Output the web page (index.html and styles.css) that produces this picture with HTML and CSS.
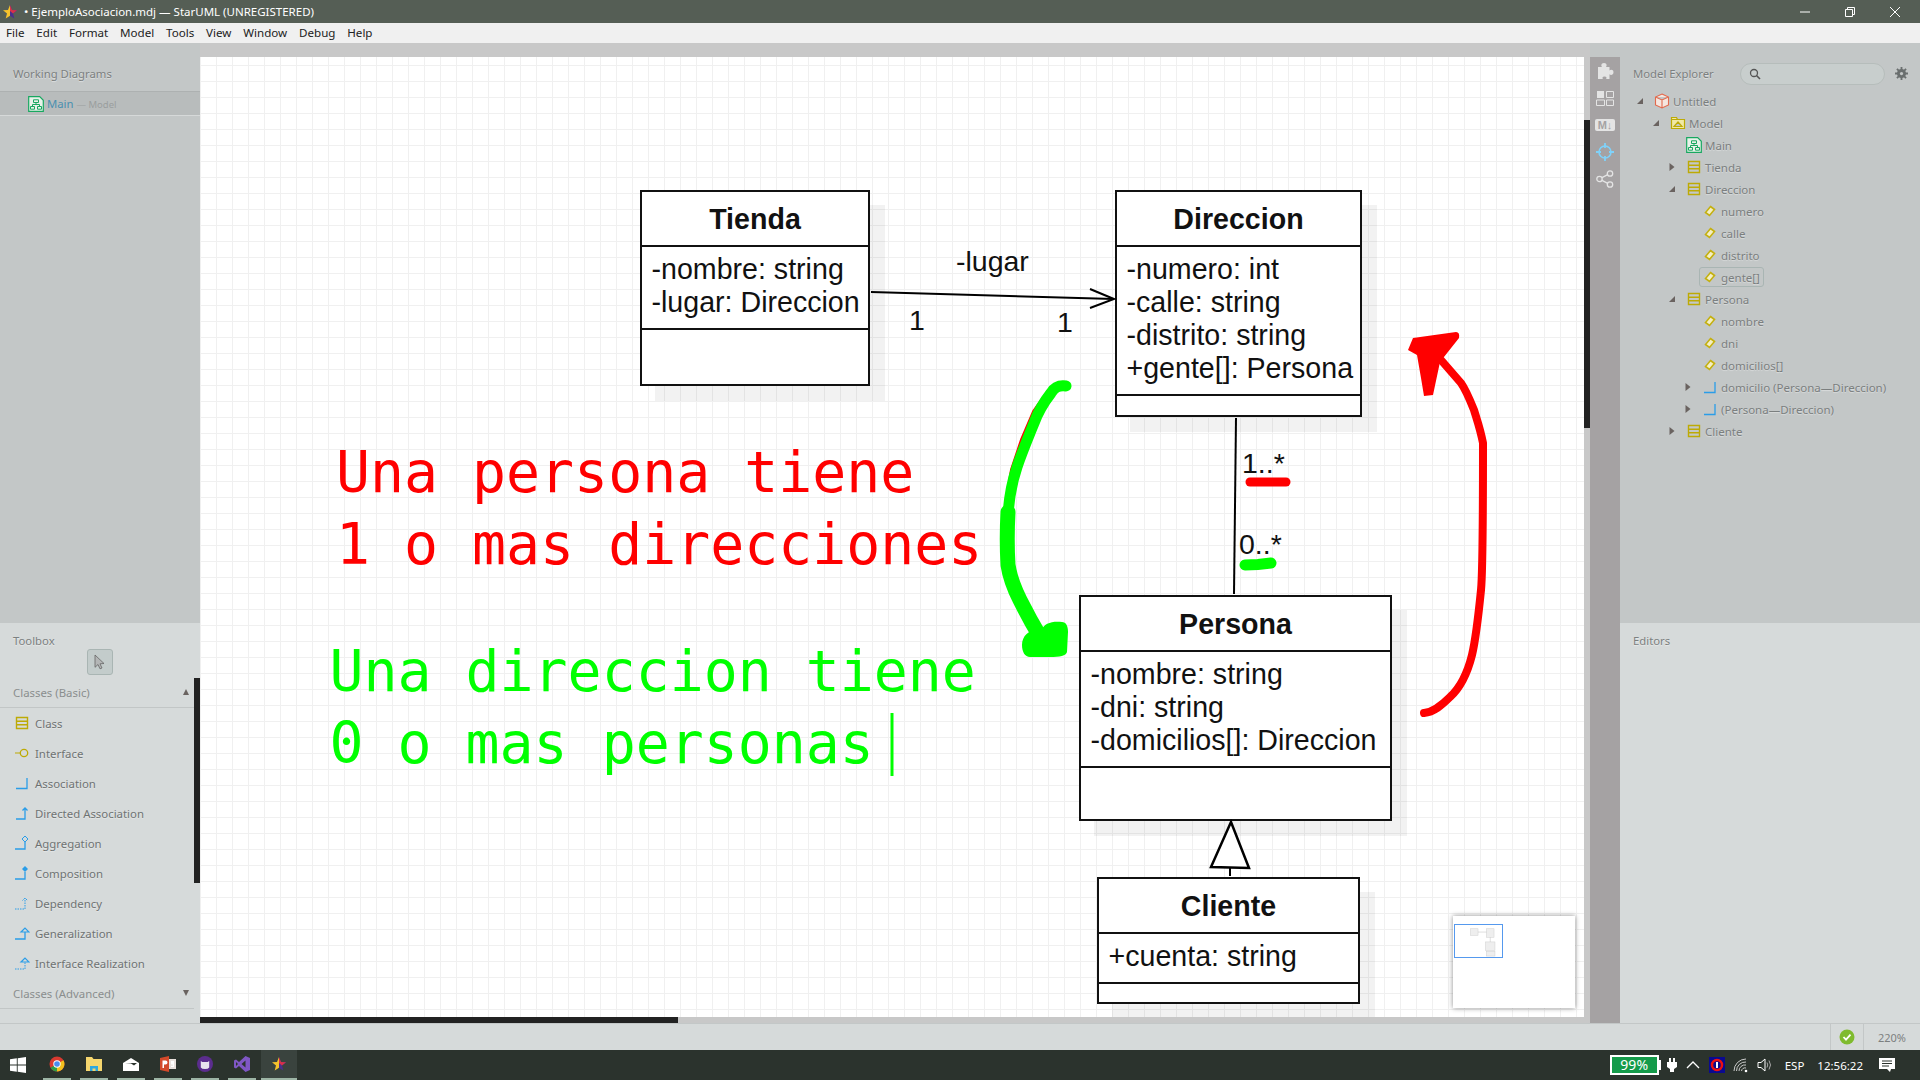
FILE: index.html
```html
<!DOCTYPE html>
<html>
<head lang="es">
    <meta charset="UTF-8">
    <title>EjemploAsociacion.mdj — StarUML</title>
    <link rel="stylesheet" href="styles.css">
</head>
<body>
    <svg class="defs" width="0" height="0">
        <symbol id="i-class" viewBox="0 0 16 16"><path d="M2.5 2.5h11v11h-11zM2.5 6.2h11M2.5 9.8h11" fill="none" stroke="#bdaa05" stroke-width="1.4"/></symbol>
        <symbol id="i-attr" viewBox="0 0 16 16"><path d="M8.5 3.5l4 3-5 6-4-3z" fill="#f4efc4" stroke="#c4b010" stroke-width="1.6"/></symbol>
        <symbol id="i-assoc" viewBox="0 0 16 16"><path d="M2 13.5h11V3" fill="none" stroke="#2a9de8" stroke-width="1.3"/></symbol>
        <symbol id="i-diagram" viewBox="0 0 16 16"><path d="M.7.7h11l3.6 3.6v11H.7z" fill="#e8f2ea" stroke="#18a860" stroke-width="1.2"/><path d="M5.5 3.8h5v2.7h-5zM2.5 10.5h4v2.7h-4zM9.5 10.5h4v2.7h-4zM8 6.5v2H4.500v2M8 8.500h3.500v2" fill="none" stroke="#18a860"/></symbol>
        <symbol id="i-open" viewBox="0 0 8 8"><path d="M7 1v6H1z" fill="#6a6360"/></symbol>
        <symbol id="i-closed" viewBox="0 0 8 8"><path d="M1.500 0l5 4-5 4z" fill="#6a6360"/></symbol>
        <symbol id="i-star" viewBox="0 0 16 16"><path d="M8 1l2 5 5 .3-4 3.300 1.300 5L8 11.800z" fill="#4a2f8c"/><path d="M8 1L6 6l-5 .3 4 3.300-1.300 5L8 11.800z" fill="#f6c22c"/><path d="M8 1l2 5 5 .3-4 3.300L8 7z" fill="#d8304a"/></symbol>
    </svg>

    <div class="titlebar">
        <svg class="app-star"><use href="#i-star"/></svg>
        <span class="title-text">• EjemploAsociacion.mdj — StarUML (UNREGISTERED)</span>
        <div class="win-buttons">
            <svg viewBox="0 0 10 10"><path d="M0 5h10" stroke="#fff"/></svg>
            <svg viewBox="0 0 10 10"><path d="M.5 2.500h7v7h-7zM2.500 2.500V.5h7v7h-2" fill="none" stroke="#fff"/></svg>
            <svg viewBox="0 0 10 10"><path d="M0 0l10 10M10 0L0 10" stroke="#fff"/></svg>
        </div>
    </div>

    <ul class="menubar">
        <li>File</li>
        <li>Edit</li>
        <li>Format</li>
        <li>Model</li>
        <li>Tools</li>
        <li>View</li>
        <li>Window</li>
        <li>Debug</li>
        <li>Help</li>
    </ul>

    <div class="main">
        <div class="left">
            <div class="working">
                <div class="panel-title">Working Diagrams</div>
                <div class="working-row">
                    <svg class="ic"><use href="#i-diagram"/></svg>
                    <span class="working-name">Main</span>
                    <span class="working-sub">— Model</span>
                </div>
            </div>
            <div class="toolbox">
                <div class="panel-title toolbox-title">Toolbox</div>
                <div class="cursor-btn">
                    <svg viewBox="0 0 16 16" width="16" height="16"><path d="M3 1l9 8.500-4 .3 2 4.200-2 .8-2-4.300-3 2.800z" fill="#b4b6b6" stroke="#666" stroke-width=".8"/></svg>
                </div>
                <div class="tool-group"><span>Classes (Basic)</span><i class="up"></i></div>
                <div class="tool"><svg class="ic"><use href="#i-class"/></svg>Class</div>
                <div class="tool"><svg class="ic" viewBox="0 0 16 16"><path d="M1 8h5" stroke="#bdaa05"/><circle cx="10" cy="8" r="3.700" fill="none" stroke="#bdaa05" stroke-width="1.300"/></svg>Interface</div>
                <div class="tool"><svg class="ic"><use href="#i-assoc"/></svg>Association</div>
                <div class="tool"><svg class="ic" viewBox="0 0 16 16"><path d="M2 14h9V3M8.500 5.500L11 3l2.500 2.500" fill="none" stroke="#2a9de8" stroke-width="1.300"/></svg>Directed Association</div>
                <div class="tool"><svg class="ic" viewBox="0 0 16 16"><path d="M1 14h10V7" fill="none" stroke="#2a9de8" stroke-width="1.300"/><path d="M11 1l3 3-3 3-3-3z" fill="none" stroke="#2a9de8"/></svg>Aggregation</div>
                <div class="tool"><svg class="ic" viewBox="0 0 16 16"><path d="M1 14h10V7" fill="none" stroke="#2a9de8" stroke-width="1.300"/><path d="M11 1l3 3-3 3-3-3z" fill="#2a9de8"/></svg>Composition</div>
                <div class="tool"><svg class="ic" viewBox="0 0 16 16"><path d="M1 14h10V3M8.500 5.500L11 3l2.500 2.500" fill="none" stroke="#2a9de8" stroke-dasharray="1.500 1"/></svg>Dependency</div>
                <div class="tool"><svg class="ic" viewBox="0 0 16 16"><path d="M1 14h10V7" fill="none" stroke="#2a9de8" stroke-width="1.300"/><path d="M7 7l4-4 4 4z" fill="none" stroke="#2a9de8" stroke-width="1.200"/></svg>Generalization</div>
                <div class="tool"><svg class="ic" viewBox="0 0 16 16"><path d="M1 14h10V7" fill="none" stroke="#2a9de8" stroke-dasharray="1.500 1"/><path d="M7 7l4-4 4 4z" fill="none" stroke="#2a9de8" stroke-width="1.200"/></svg>Interface Realization</div>
                <div class="tool-group tool-group-adv"><span>Classes (Advanced)</span><i class="down"></i></div>
                <div class="tool-group tool-group-next"><span>Packages</span><i class="down"></i></div>
                <div class="toolbox-scroll"></div>
            </div>
        </div>

        <div class="center">
            <div class="canvas-row">
                <div class="canvas">
                    <div class="node node-tienda">
                        <div class="node-name">Tienda</div>
                        <div class="node-attrs">
                            <div>-nombre: string</div>
                            <div>-lugar: Direccion</div>
                        </div>
                        <div class="node-ops"></div>
                    </div>
                    <div class="node node-direccion">
                        <div class="node-name">Direccion</div>
                        <div class="node-attrs">
                            <div>-numero: int</div>
                            <div>-calle: string</div>
                            <div>-distrito: string</div>
                            <div>+gente[]: Persona</div>
                        </div>
                        <div class="node-ops"></div>
                    </div>
                    <div class="node node-persona">
                        <div class="node-name">Persona</div>
                        <div class="node-attrs">
                            <div>-nombre: string</div>
                            <div>-dni: string</div>
                            <div>-domicilios[]: Direccion</div>
                        </div>
                        <div class="node-ops"></div>
                    </div>
                    <div class="node node-cliente">
                        <div class="node-name">Cliente</div>
                        <div class="node-attrs">
                            <div>+cuenta: string</div>
                        </div>
                        <div class="node-ops"></div>
                    </div>

                    <span class="edge-label lbl-lugar">-lugar</span>
                    <span class="edge-label lbl-one-a">1</span>
                    <span class="edge-label lbl-one-b">1</span>
                    <span class="edge-label lbl-many-a">1..*</span>
                    <span class="edge-label lbl-many-b">0..*</span>

                    <div class="note note-red">Una persona tiene<br>1 o mas direcciones</div>
                    <div class="note note-green">Una direccion tiene<br>0 o mas personas</div>

                    <!-- viewBox in page coordinates -->
                    <svg class="overlay" viewBox="200 57 1384 960">
                        <path d="M871 292L1114 299" stroke="#000" stroke-width="2" fill="none"/>
                        <path d="M1090 289L1114 299L1090 308" stroke="#000" stroke-width="2" fill="none"/>
                        <path d="M1236 418L1234 594" stroke="#000" stroke-width="2"/>
                        <path d="M1231 822L1211 867L1249 868z" fill="#fff" stroke="#000" stroke-width="2.500"/>
                        <path d="M1230 868V876" stroke="#000" stroke-width="2"/>

                        <path d="M1062 384L1050 391L1035 412L1023 440L1013 470L1008 500" fill="none" stroke="#f00" stroke-width="6" stroke-linecap="round"/>
                        <path d="M1066 386C1058 385 1054 388 1051 393C1044 402 1038 412 1034 423C1028 438 1022 452 1017 467C1012 482 1009 498 1008 515" fill="none" stroke="#0f0" stroke-width="11" stroke-linecap="round" stroke-linejoin="round"/>
                        <path d="M1008 512C1007 530 1007 548 1008 565C1010 578 1015 590 1020 600C1026 612 1033 625 1042 640" fill="none" stroke="#0f0" stroke-width="15" stroke-linecap="round" stroke-linejoin="round"/>
                        <path d="M1022 645C1022 634 1032 628 1041 631C1044 623 1052 621 1062 622C1066 622 1068 626 1068 632L1067 652C1066 656 1060 657 1050 657L1030 657C1025 657 1022 652 1022 645z" fill="#0f0"/>

                        <path d="M1424 713C1434 712 1442 705 1450 697C1460 688 1467 675 1472 655C1476 638 1479 610 1481 590C1483 570 1483 520 1483 443C1480 428 1477 420 1474 410C1470 400 1466 390 1461 383L1441 360" fill="none" stroke="#f00" stroke-width="8" stroke-linecap="round" stroke-linejoin="round"/>
                        <path d="M1408 350L1413 338L1456 332Q1460 332 1459 338L1440 362L1433 395L1424 396L1421 378L1417 355z" fill="#f00"/>
                        <path d="M1250 482H1286" stroke="#f00" stroke-width="9" stroke-linecap="round"/>
                        <path d="M1245 565L1258 564.500L1271 563" fill="none" stroke="#0f0" stroke-width="11" stroke-linecap="round"/>

                        <path d="M892 713V776" stroke="#0f0" stroke-width="3"/>
                    </svg>

                    <div class="minimap">
                        <svg class="mini-view" viewBox="0 0 49 34">
                            <g fill="#eee" stroke="#ccc" stroke-width=".5">
                                <rect x="16" y="4" width="8" height="7"/>
                                <rect x="33" y="4" width="8" height="9"/>
                                <rect x="32" y="18" width="10" height="9"/>
                                <rect x="33" y="28" width="9" height="5"/>
                            </g>
                            <path d="M24 7.500h9M37 13v5" stroke="#bbb" stroke-width=".5"/>
                        </svg>
                    </div>
                </div>
                <div class="vscroll"><div class="vscroll-thumb"></div></div>
            </div>
            <div class="hscroll"><div class="hscroll-thumb"></div></div>
        </div>

        <div class="rail">
            <svg class="rail-ic" viewBox="0 0 18 18"><path d="M2 5h4C5 4 4.800 1 8 1s3 3 2 4h3.500v3.500c1-1 4-1.200 4 1.800s-3 3-4 2V17H10c1-1 .8-2.500-1.500-2.500S6 16 7 17H2z" fill="#e4e4e4"/></svg>
            <svg class="rail-ic" viewBox="0 0 18 18"><path d="M1 2h7v7H1z" fill="#e4e4e4"/><path d="M10.500 2.500h7v6h-7zM.5 11h8v5.500h-8zM10.500 11h7v5.500h-7z" fill="none" stroke="#e4e4e4"/></svg>
            <div class="md-badge">M↓</div>
            <svg class="rail-ic" viewBox="0 0 18 18"><circle cx="9" cy="9" r="6" fill="none" stroke="#7fd2fa" stroke-width="1.600"/><path d="M9 0v5M9 13v5M0 9h5M13 9h5" stroke="#7fd2fa" stroke-width="1.800"/></svg>
            <svg class="rail-ic" viewBox="0 0 18 18"><circle cx="3.500" cy="9" r="2.700" fill="none" stroke="#e4e4e4" stroke-width="1.300"/><circle cx="14" cy="3.500" r="2.700" fill="none" stroke="#e4e4e4" stroke-width="1.300"/><circle cx="14" cy="14.500" r="2.700" fill="none" stroke="#e4e4e4" stroke-width="1.300"/><path d="M6 7.700l5.700-3M6 10.300l5.700 3" stroke="#e4e4e4" stroke-width="1.300"/></svg>
        </div>

        <div class="right">
            <div class="explorer">
                <div class="explorer-head">
                    <span class="panel-title explorer-title">Model Explorer</span>
                    <div class="search">
                        <svg viewBox="0 0 12 12" width="12" height="12"><circle cx="5" cy="5" r="3.500" fill="none" stroke="#555" stroke-width="1.300"/><path d="M7.500 7.500L11 11" stroke="#555" stroke-width="1.600"/></svg>
                    </div>
                    <svg class="gear" viewBox="0 0 12 12"><circle cx="6" cy="6" r="3" fill="none" stroke="#6a6f6f" stroke-width="2.400"/><path d="M6 0v12M0 6h12M1.800 1.800l8.400 8.400M10.200 1.800l-8.400 8.400" stroke="#6a6f6f" stroke-width="1.700"/><circle cx="6" cy="6" r="1.500" fill="#c3c7c7"/></svg>
                </div>
                <div class="tree">
                    <div class="row lv0"><svg class="arrow"><use href="#i-open"/></svg><svg class="ic" viewBox="0 0 16 16"><path d="M8 1l6.500 3v8L8 15l-6.500-3V4zM1.500 4L8 7l6.500-3M8 7v8" fill="#f5e6df" stroke="#e2694c" stroke-width="1.100"/></svg>Untitled</div>
                    <div class="row lv1"><svg class="arrow"><use href="#i-open"/></svg><svg class="ic" viewBox="0 0 16 16"><path d="M1.500 13.500v-11h5l1 2h7v9zM1.500 4.500h6M4 11.500h8L8 7z" fill="#f1e9a5" stroke="#bdaa05" stroke-width="1.200"/></svg>Model</div>
                    <div class="row lv2"><span class="arrow"></span><svg class="ic"><use href="#i-diagram"/></svg>Main</div>
                    <div class="row lv2"><svg class="arrow"><use href="#i-closed"/></svg><svg class="ic"><use href="#i-class"/></svg>Tienda</div>
                    <div class="row lv2"><svg class="arrow"><use href="#i-open"/></svg><svg class="ic"><use href="#i-class"/></svg>Direccion</div>
                    <div class="row lv3"><span class="arrow"></span><svg class="ic"><use href="#i-attr"/></svg>numero</div>
                    <div class="row lv3"><span class="arrow"></span><svg class="ic"><use href="#i-attr"/></svg>calle</div>
                    <div class="row lv3"><span class="arrow"></span><svg class="ic"><use href="#i-attr"/></svg>distrito</div>
                    <div class="row lv3"><span class="arrow"></span><svg class="ic"><use href="#i-attr"/></svg>gente[]<span class="row-selected"></span></div>
                    <div class="row lv2"><svg class="arrow"><use href="#i-open"/></svg><svg class="ic"><use href="#i-class"/></svg>Persona</div>
                    <div class="row lv3"><span class="arrow"></span><svg class="ic"><use href="#i-attr"/></svg>nombre</div>
                    <div class="row lv3"><span class="arrow"></span><svg class="ic"><use href="#i-attr"/></svg>dni</div>
                    <div class="row lv3"><span class="arrow"></span><svg class="ic"><use href="#i-attr"/></svg>domicilios[]</div>
                    <div class="row lv3"><svg class="arrow"><use href="#i-closed"/></svg><svg class="ic"><use href="#i-assoc"/></svg>domicilio (Persona—Direccion)</div>
                    <div class="row lv3"><svg class="arrow"><use href="#i-closed"/></svg><svg class="ic"><use href="#i-assoc"/></svg>(Persona—Direccion)</div>
                    <div class="row lv2"><svg class="arrow"><use href="#i-closed"/></svg><svg class="ic"><use href="#i-class"/></svg>Cliente</div>
                </div>
            </div>
            <div class="editors">
                <div class="panel-title editors-title">Editors</div>
            </div>
        </div>
    </div>

    <div class="statusbar">
        <div class="status-cell status-check">
            <svg viewBox="0 0 16 16" width="16" height="16"><circle cx="8" cy="8" r="7.500" fill="#7fbb2e"/><path d="M4.500 8l2.500 2.700 4.500-5" fill="none" stroke="#fff" stroke-width="1.800"/></svg>
        </div>
        <div class="status-cell status-zoom">220%</div>
    </div>

    <div class="taskbar">
        <div class="task task-start">
            <svg viewBox="0 0 16 16" width="16" height="16"><path d="M0 2.300l6.800-1v6.200H0zM7.700 1.200L16 0v7.500H7.700zM0 8.500h6.800v6.200l-6.800-1zM7.700 8.500H16V16l-8.300-1.200z" fill="#fff"/></svg>
        </div>
        <div class="task task-app">
            <svg viewBox="0 0 16 16" width="16" height="16"><circle cx="8" cy="8" r="7.500" fill="#d93a30"/><path d="M8 8L1.500 11.800A7.500 7.500 0 0 0 8 15.500z" fill="#2f9e48"/><path d="M8 8v7.500a7.500 7.500 0 0 0 6.500-11.200z" fill="#f3c11e"/><circle cx="8" cy="8" r="3.700" fill="#fff"/><circle cx="8" cy="8" r="2.800" fill="#4a8cf0"/></svg>
        </div>
        <div class="task task-app">
            <svg viewBox="0 0 16 16" width="16" height="16"><path d="M0 1h6l1.500 2H16v12H0z" fill="#f5d66e"/><path d="M4 15v-5h8v5h-2.500v-2.500h-3V15z" fill="#2fa8e0"/></svg>
        </div>
        <div class="task task-app">
            <svg viewBox="0 0 16 16" width="16" height="16"><path d="M0 7l8-5 8 5v8H0z" fill="#fff"/><path d="M2 7h12l-3 2.500L8 7.500z" fill="#2b332d"/></svg>
        </div>
        <div class="task task-app">
            <svg viewBox="0 0 16 16" width="16" height="16"><path d="M0 2l9-2v16l-9-2z" fill="#d2492a"/><path d="M9 3h7v10H9z" fill="#e8e0dc"/><path d="M2.500 4.500h3q2 0 2 2t-2 2h-1.500V12h-1.500zM11 5h3v6h-3V9.800h1.800V8.500H11z" fill="#fff"/></svg>
        </div>
        <div class="task task-app">
            <svg viewBox="0 0 16 16" width="16" height="16"><circle cx="8" cy="8" r="8" fill="#5b2d8e"/><path d="M3.800 5l1.500 1h5.400l1.500-1v6.500q-1 1.500-4.200 1.500t-4.200-1.500z" fill="#e8e4ee"/></svg>
        </div>
        <div class="task task-app">
            <svg viewBox="0 0 16 16" width="16" height="16"><path d="M11.500 0L16 2v12l-4.500 2L5 10 2 12.500 0 11.500V4.500L2 3.500 5 6zM11.500 4.500L7.500 8l4 3.500zM2 6v4l2-2z" fill="#7f57c4"/></svg>
        </div>
        <div class="task task-app task-active">
            <svg class="task-star"><use href="#i-star"/></svg>
        </div>
        <div class="tray">
            <div class="battery"><span>99%</span></div>
            <svg class="tray-ic tray-plug" viewBox="0 0 16 16"><path d="M5 1h2v4h2V1h2v4h2v5l-3 2v3H6v-3l-3-2V5h2z" fill="#fff"/></svg>
            <svg class="tray-ic" viewBox="0 0 16 16"><path d="M2 11l6-6 6 6" fill="none" stroke="#fff" stroke-width="1.300"/></svg>
            <svg class="tray-ic" viewBox="0 0 16 16"><path d="M0 0h16v16H0z" fill="#0a0a90"/><circle cx="8" cy="8" r="5" fill="none" stroke="#f01010" stroke-width="2.500"/><path d="M7 5h2v6H7z" fill="#fff"/></svg>
            <svg class="tray-ic" viewBox="0 0 16 16"><path d="M1 14A12 12 0 0 1 13 2M3.500 14A9 9 0 0 1 13 5M6 14A6 6 0 0 1 13 8M8.500 14A3.500 3.500 0 0 1 13 11" fill="none" stroke="#dcdcdc" stroke-width=".9"/><circle cx="13" cy="14" r="1.300" fill="#fff"/></svg>
            <svg class="tray-ic" viewBox="0 0 16 16"><path d="M1 5.500h3L8 2v12L4 10.500H1z" fill="none" stroke="#fff"/><path d="M10 5.500q1.500 2.500 0 5M12 3.500q3 4.500 0 9" fill="none" stroke="#aaa"/></svg>
            <span class="tray-text tray-lang">ESP</span>
            <span class="tray-text tray-clock">12:56:22</span>
            <svg class="tray-note" viewBox="0 0 16 16"><path d="M0 1h16v11h-4l-1 3-3-3H0z" fill="#fff"/><path d="M3 4h10M3 6.500h10M3 9h7" stroke="#2b332d"/></svg>
        </div>
    </div>
</body>
</html>
```

FILE: styles.css
```css
*{
    margin: 0;
    padding: 0;
    box-sizing: border-box;
}
html, body{
    width: 1920px;
    height: 1080px;
    overflow: hidden;
}
body{
    display: flex;
    flex-direction: column;
    font-family: "Noto Sans", sans-serif;
    font-size: 12px;
    background: #c3c7c7;
}
ul{
    list-style: none;
}
.defs{
    position: absolute;
}
.ic{
    width: 16px;
    height: 16px;
    flex: none;
}

/* title + menu */
.titlebar{
    height: 23px;
    background: #555e55;
    color: #fff;
    display: flex;
    align-items: center;
    padding-left: 2px;
    flex: none;
}
.app-star{
    width: 16px;
    height: 16px;
}
.title-text{
    margin-left: 6px;
    font-size: 11.500px;
}
.win-buttons{
    margin-left: auto;
    display: flex;
    gap: 35px;
    padding-right: 20px;
}
.win-buttons svg{
    width: 10px;
    height: 10px;
}
.menubar{
    height: 20px;
    background: #f0f0f0;
    color: #222;
    display: flex;
    gap: 11.800px;
    align-items: center;
    padding-left: 6px;
    padding-bottom: 1px;
    flex: none;
    font-size: 11.600px;
}

.main{
    height: 980px;
    display: flex;
    flex: none;
}

/* left column */
.left{
    width: 200px;
    display: flex;
    flex-direction: column;
    flex: none;
}
.panel-title{
    color: #7c8080;
    font-size: 11.300px;
    text-shadow: 0 1px 1px rgba(255,255,255,.5);
}
.working{
    height: 580px;
    background: #c3c7c7;
    padding-top: 23px;
}
.working .panel-title{
    padding-left: 13px;
    height: 25px;
}
.working-row{
    height: 25px;
    background: #b8bcbc;
    border-top: 1px solid #adb1b1;
    border-bottom: 1px solid #d6d9d9;
    display: flex;
    align-items: center;
    padding-left: 28px;
    gap: 3px;
    font-size: 11.300px;
}
.working-name{
    color: #4a90b0;
}
.working-sub{
    color: #9a9e9e;
    font-size: 9.500px;
    padding-top: 1px;
}
.toolbox{
    height: 400px;
    background: #d6dada;
    position: relative;
    overflow: hidden;
}
.toolbox-title{
    padding: 10px 0 0 13px;
    height: 26px;
}
.cursor-btn{
    width: 26px;
    height: 26px;
    margin-left: 87px;
    background: #c3cccb;
    border: 1px solid #a9b5b3;
    border-radius: 3px;
    display: flex;
    align-items: center;
    justify-content: center;
}
.tool-group{
    height: 33px;
    border-bottom: 1px solid #c2c6c6;
    display: flex;
    align-items: center;
    justify-content: space-between;
    padding: 2px 11px 0 13px;
    color: #8a8e8e;
    font-size: 11.400px;
}
.tool-group-adv{
    height: 31px;
    margin-right: 6px;
    padding: 0 5px 0 13px;
}
.tool-group-next{
    height: 34px;
    margin-right: 6px;
    padding: 0 5px 0 13px;
    border-bottom: none;
}
.up, .down{
    width: 0;
    height: 0;
    border-left: 3.500px solid transparent;
    border-right: 3.500px solid transparent;
}
.up{
    border-bottom: 6px solid #6a6360;
}
.down{
    border-top: 6px solid #6a6360;
}
.tool{
    height: 30px;
    display: flex;
    align-items: center;
    gap: 5px;
    padding-left: 14px;
    color: #6f7373;
    font-size: 11.400px;
    text-shadow: 0 1px 1px rgba(255,255,255,.4);
}
.toolbox-scroll{
    position: absolute;
    right: 0;
    top: 55px;
    width: 6px;
    height: 205px;
    background: #222;
}

/* centre */
.center{
    width: 1390px;
    display: flex;
    flex-direction: column;
    flex: none;
    padding-top: 14px;
    background: #c8c8c8;
}
.canvas-row{
    height: 960px;
    display: flex;
}
.canvas{
    width: 1384px;
    height: 960px;
    position: relative;
    overflow: hidden;
    background-color: #fff;
    background-image: linear-gradient(#f0f0f0 1px, transparent 1px), linear-gradient(90deg, #f0f0f0 1px, transparent 1px);
    background-size: 16px 16px;
    background-position: 0 8px;
}
.vscroll{
    width: 6px;
    position: relative;
    background: #c8c8c8;
}
.vscroll-thumb{
    position: absolute;
    top: 63px;
    width: 6px;
    height: 308px;
    background: #222;
}
.hscroll{
    height: 6px;
    width: 1384px;
    background: #c8c8c8;
}
.hscroll-thumb{
    width: 478px;
    height: 6px;
    background: #222;
}

/* diagram */
.node{
    position: absolute;
    background: #fff;
    border: 2px solid #111;
    box-shadow: 15px 15px 0 rgba(0,0,0,.05);
    display: flex;
    flex-direction: column;
    font-family: "Liberation Sans", Arial, sans-serif;
    font-size: 28.600px;
    color: #111;
    white-space: nowrap;
}
.node-name{
    height: 55px;
    flex: none;
    border-bottom: 2px solid #111;
    font-weight: bold;
    text-align: center;
    line-height: 55px;
}
.node-attrs{
    flex: none;
    padding: 6px 0 9px 9.500px;
    border-bottom: 2px solid #111;
    line-height: 33px;
}
.node-ops{
    flex: 1;
}
.node-tienda{
    left: 440px;
    top: 133px;
    width: 230px;
    height: 196px;
}
.node-direccion{
    left: 915px;
    top: 133px;
    width: 247px;
    height: 227px;
}
.node-persona{
    left: 879px;
    top: 538px;
    width: 313px;
    height: 226px;
}
.node-cliente{
    left: 897px;
    top: 820px;
    width: 263px;
    height: 127px;
}
.edge-label{
    position: absolute;
    font-family: "Liberation Sans", Arial, sans-serif;
    font-size: 28.500px;
    line-height: 32px;
    color: #111;
}
.lbl-lugar{
    left: 756px;
    top: 188px;
}
.lbl-one-a{
    left: 709px;
    top: 247px;
}
.lbl-one-b{
    left: 857px;
    top: 249px;
}
.lbl-many-a{
    left: 1042px;
    top: 390px;
}
.lbl-many-b{
    left: 1039px;
    top: 471px;
}
.note{
    position: absolute;
    font-family: "DejaVu Sans Mono", "Liberation Mono", monospace;
    font-size: 56.500px;
    line-height: 72px;
    white-space: nowrap;
}
.note-red{
    left: 136px;
    top: 380px;
    color: #f00;
}
.note-green{
    left: 129.500px;
    top: 579px;
    color: #0f0;
}
.overlay{
    position: absolute;
    left: 0;
    top: 0;
    width: 1384px;
    height: 960px;
}
.minimap{
    position: absolute;
    left: 1253px;
    top: 859px;
    width: 122px;
    height: 92px;
    background: #fff;
    box-shadow: 0 0 5px rgba(0,0,0,.45);
}
.mini-view{
    position: absolute;
    left: 1px;
    top: 8px;
    width: 49px;
    height: 34px;
    border: 1px solid #5599ee;
}

/* icon rail */
.rail{
    width: 30px;
    flex: none;
    margin-top: 14px;
    background: #a5a2a3;
    display: flex;
    flex-direction: column;
    align-items: center;
    gap: 9px;
    padding-top: 5px;
}
.rail-ic{
    width: 18px;
    height: 18px;
}
.md-badge{
    width: 20px;
    height: 12px;
    margin: 3px 0;
    background: #e4e4e4;
    border-radius: 2px;
    color: #a5a2a3;
    font: bold 11px/12px "Liberation Sans", sans-serif;
    text-align: center;
}

/* right column */
.right{
    width: 300px;
    flex: none;
    display: flex;
    flex-direction: column;
}
.explorer{
    height: 580px;
    background: #c3c7c7;
}
.explorer-head{
    height: 47px;
    display: flex;
    align-items: center;
    padding: 14px 0 0 13px;
}
.explorer-title{
    width: 107px;
}
.search{
    width: 145px;
    height: 22px;
    background: #c8cecd;
    border: 1px solid #b6bdbb;
    border-radius: 11px;
    padding-left: 8px;
    display: flex;
    align-items: center;
}
.gear{
    width: 13px;
    height: 13px;
    margin-left: 10px;
}
.row{
    height: 22px;
    display: flex;
    align-items: center;
    color: #7b7f7f;
    font-size: 11.500px;
    position: relative;
    white-space: nowrap;
    text-shadow: 0 1px 1px rgba(255,255,255,.4);
}
.row .ic{
    margin-right: 3px;
}
.arrow{
    width: 8px;
    height: 8px;
    margin: 0 10px 0 2px;
    flex: none;
}
.lv0{ padding-left: 14px; }
.lv1{ padding-left: 30px; }
.lv2{ padding-left: 46px; }
.lv3{ padding-left: 62px; }
.row-selected{
    position: absolute;
    left: 79px;
    top: 1px;
    width: 65px;
    height: 20px;
    border: 1px solid #a9b5b3;
    border-radius: 3px;
}
.editors{
    height: 400px;
    background: #d6dada;
}
.editors-title{
    padding: 10px 0 0 13px;
}

/* status + taskbar */
.statusbar{
    height: 27px;
    flex: none;
    background: #d6dada;
    border-top: 1px solid #c3c7c7;
    display: flex;
    justify-content: flex-end;
}
.status-cell{
    display: flex;
    align-items: center;
    justify-content: center;
    border-left: 1px solid #c3c7c7;
    color: #7c8080;
    font-size: 11px;
}
.status-check{
    width: 33px;
}
.status-zoom{
    width: 57px;
}
.taskbar{
    height: 30px;
    flex: none;
    background: #2b332d;
    display: flex;
    color: #fff;
}
.task{
    height: 30px;
    display: flex;
    align-items: center;
    justify-content: center;
}
.task-start{
    width: 36px;
    margin-right: 7px;
}
.task-app{
    width: 28px;
    margin-right: 9px;
    border-bottom: 2px solid #9db5a5;
}
.task-active{
    width: 36px;
    background: #3a433e;
    margin-left: -4px;
}
.task-star{
    width: 16px;
    height: 16px;
}
.tray{
    margin-left: auto;
    display: flex;
    align-items: center;
    padding-right: 25px;
}
.battery{
    width: 49px;
    height: 20px;
    background: #149b4a;
    border: 2px solid #fff;
    font-size: 14px;
    line-height: 16px;
    text-align: center;
    margin-right: 5px;
    position: relative;
}
.battery::after{
    content: "";
    position: absolute;
    right: -4px;
    top: 3px;
    width: 2px;
    height: 10px;
    background: #fff;
}
.tray-ic{
    width: 16px;
    height: 16px;
    margin-right: 8px;
}
.tray-plug{
    margin-right: 5px;
}
.tray-text{
    font-size: 11.500px;
}
.tray-lang{
    margin-left: 4px;
}
.tray-clock{
    margin-left: 13px;
}
.tray-note{
    width: 16px;
    height: 16px;
    margin-left: 16px;
}
```
